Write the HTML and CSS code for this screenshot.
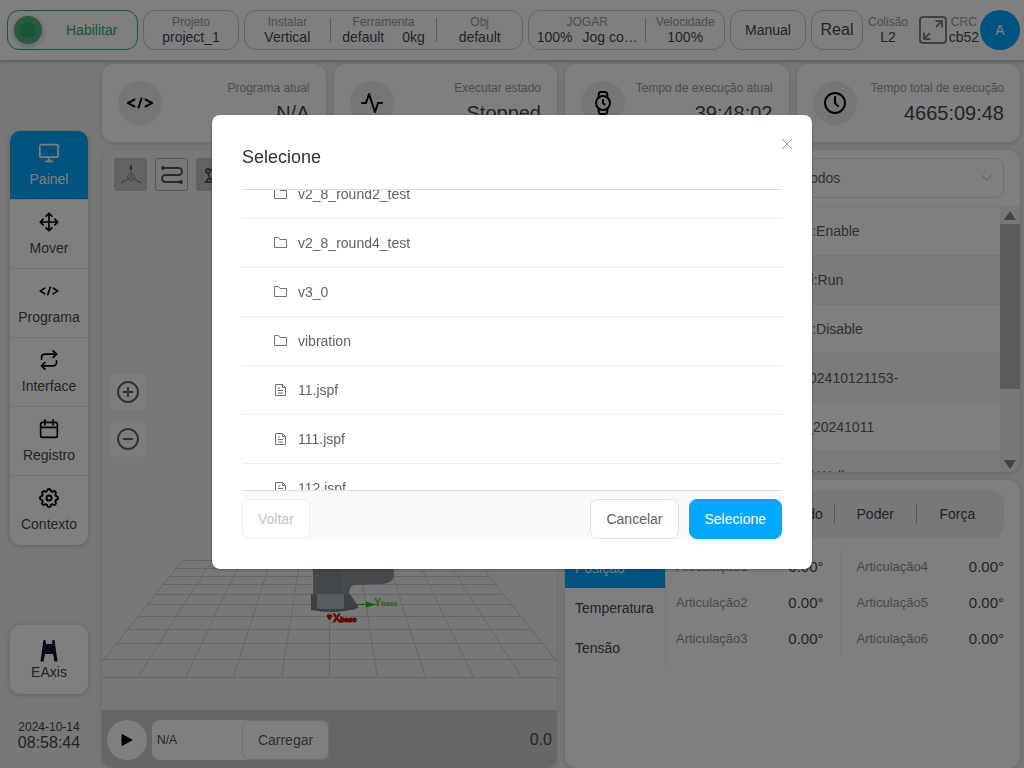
FILE: index.html
```html
<!DOCTYPE html>
<html lang="pt">
<head>
    <meta charset="UTF-8">
    <meta name="viewport" content="width=device-width, initial-scale=1.0">
    <title>Painel</title>
    <link rel="stylesheet" href="styles.css">
</head>
<body>

    <div class="app">
        <header class="topbar">
            <button class="enable-btn"><span class="led"></span><span>Habilitar</span></button>
            <div class="box project">
                <div class="info"><span class="label">Projeto</span><span class="value">project_1</span></div>
            </div>
            <div class="box setup">
                <div class="info"><span class="label">Instalar</span><span class="value">Vertical</span></div>
                <div class="info wide"><span class="label">Ferramenta</span><span class="value tool"><span>default</span><span>0kg</span></span></div>
                <div class="info"><span class="label">Obj</span><span class="value">default</span></div>
            </div>
            <div class="box jog">
                <div class="info wide"><span class="label">JOGAR</span><span class="value jog-value"><span>100%</span><span>Jog co…</span></span></div>
                <div class="info"><span class="label">Velocidade</span><span class="value">100%</span></div>
            </div>
            <button class="box mode-btn">Manual</button>
            <button class="box real-btn">Real</button>
            <div class="info"><span class="label">Colisão</span><span class="value">L2</span></div>
            <div class="topbar-end">
                <button class="plain-btn" aria-label="Tela cheia">
                    <svg class="fullscreen" width="30" height="30" viewBox="0 0 30 30"><rect x="2" y="2" width="26" height="26" rx="3"/><path d="M18 12l6-6M17.500 6H24V12.500M12 18l-6 6M6 17.500V24H12.500"/></svg>
                </button>
                <div class="info"><span class="label">CRC</span><span class="value">cb52</span></div>
                <button class="avatar">A</button>
            </div>
        </header>

        <div class="body">
            <aside class="sidebar">
                <nav class="menu">
                    <a class="menu-item active" href="#painel">
                        <svg class="icon" viewBox="0 0 24 24"><rect x="1" y="2" width="22" height="15" rx="2"/><path d="M8 22h8M12 17v5"/></svg>
                        <span>Painel</span>
                    </a>
                    <a class="menu-item" href="#mover">
                        <svg class="icon" viewBox="0 0 24 24"><path d="M5 8.500L1.500 12L5 15.500M8.500 5L12 1.500L15.500 5M15.500 19L12 22.500L8.500 19M19 8.500L22.500 12L19 15.500M2 12h20M12 2v20"/></svg>
                        <span>Mover</span>
                    </a>
                    <a class="menu-item" href="#programa">
                        <svg class="icon" viewBox="0 0 24 24"><path d="M7 8.500L1.500 12L7 15.500M17 8.500L22.500 12L17 15.500M13.500 7.500L10.500 16.500"/></svg>
                        <span>Programa</span>
                    </a>
                    <a class="menu-item" href="#interface">
                        <svg class="icon" viewBox="0 0 24 24"><path d="M17 1l4 4-4 4M3 11V9a4 4 0 0 1 4-4h14M7 23l-4-4 4-4M21 13v2a4 4 0 0 1-4 4H3"/></svg>
                        <span>Interface</span>
                    </a>
                    <a class="menu-item" href="#registro">
                        <svg class="icon" viewBox="0 0 24 24"><rect x="2" y="4" width="20" height="18" rx="2"/><path d="M17 1v6M7 1v6M2 10h20"/></svg>
                        <span>Registro</span>
                    </a>
                    <a class="menu-item" href="#contexto">
                        <svg class="icon" viewBox="2 2 20 20"><path d="M10.325 4.317c.426-1.756 2.924-1.756 3.350 0a1.724 1.724 0 0 0 2.573 1.066c1.543-.94 3.310.826 2.370 2.370a1.724 1.724 0 0 0 1.065 2.572c1.756.426 1.756 2.924 0 3.350a1.724 1.724 0 0 0-1.066 2.573c.94 1.543-.826 3.310-2.370 2.370a1.724 1.724 0 0 0-2.572 1.065c-.426 1.756-2.924 1.756-3.350 0a1.724 1.724 0 0 0-2.573-1.066c-1.543.94-3.310-.826-2.370-2.370a1.724 1.724 0 0 0-1.065-2.572c-1.756-.426-1.756-2.924 0-3.350a1.724 1.724 0 0 0 1.066-2.573c-.94-1.543.826-3.310 2.370-2.370.996.608 2.296.07 2.572-1.065z"/><circle cx="12" cy="12" r="2.500"/></svg>
                        <span>Contexto</span>
                    </a>
                </nav>
                <a class="menu-item eaxis" href="#eaxis">
                    <svg class="eaxis-icon" width="18" height="22" viewBox="0 0 18 22"><path d="M3.500 0H5.500L6 4H12L12.500 0H14.500L17.500 21.500H14.500L13 14H5L3.500 21.500H.5z"/></svg>
                    <span>EAxis</span>
                </a>
                <div class="clock">
                    <span class="date">2024-10-14</span>
                    <span class="time">08:58:44</span>
                </div>
            </aside>

            <main class="content">
                <section class="stats">
                    <div class="card stat">
                        <span class="stat-icon"><svg class="stat-svg" viewBox="0 0 24 24"><path d="M6.500 8.500L0 12L6.500 15.500M17.500 8.500L24 12L17.500 15.500M13.500 7.500L10.500 16.500"/></svg></span>
                        <div class="stat-text"><span class="label">Programa atual</span><span class="number">N/A</span></div>
                    </div>
                    <div class="card stat">
                        <span class="stat-icon"><svg class="stat-svg" viewBox="0 0 24 24"><path d="M22 12h-4l-3 9L9 3l-3 9H2"/></svg></span>
                        <div class="stat-text"><span class="label">Executar estado</span><span class="number">Stopped</span></div>
                    </div>
                    <div class="card stat">
                        <span class="stat-icon"><svg class="stat-svg" viewBox="0 0 24 24"><circle cx="12" cy="12" r="7"/><path d="M12 9v3l1.500 1.500M16.510 17.350l-.35 3.830a2 2 0 0 1-2 1.820H9.830a2 2 0 0 1-2-1.820l-.35-3.830m.010-10.700l.35-3.830A2 2 0 0 1 9.830 1h4.350a2 2 0 0 1 2 1.820l.35 3.830"/></svg></span>
                        <div class="stat-text"><span class="label">Tempo de execução atual</span><span class="number">39:48:02</span></div>
                    </div>
                    <div class="card stat">
                        <span class="stat-icon"><svg class="stat-svg" viewBox="0 0 24 24"><circle cx="12" cy="12" r="10"/><path d="M12 6v6l3 3"/></svg></span>
                        <div class="stat-text"><span class="label">Tempo total de execução</span><span class="number">4665:09:48</span></div>
                    </div>
                </section>

                <section class="card viewer">
                    <div class="scene">
                        <svg class="scene-svg" viewBox="0 0 455 560" preserveAspectRatio="xMidYMax meet">
                            <!-- floor grid -->
                            <path class="floor" d="M81 410.500H374M74 418.500H380M68 426.500H387M62 434.500H393M54 444.500H401M46 454.500H409M37 466.500H418M26 479.500H429M15 493.500H440M0 509.500H455M0 527.500H455
                                M80.500 410.500L-12.500 527.500M110 410.500L35.500 527.500M139 410.500L83.500 527.500M168.500 410.500L131.500 527.500M198 410.500L179.500 527.500M227.500 410.500V527.500M257 410.500L275.500 527.500M286 410.500L323.500 527.500M315.500 410.500L371.500 527.500M345 410.500L419.500 527.500M374.500 410.500L467.500 527.500"/>
                            <!-- robot base -->
                            <path d="M211 380H292V424Q292 433 281 434L252 435Q247 436 247 444V446H211z" fill="#8d9499"/>
                            <path d="M216 380H240V445H216z" fill="#868e93"/>
                            <path d="M209 444H248L256 456Q254 461 242 460H209z" fill="#7d858b"/>
                            <path d="M215 444H242V459H215z" fill="#b2b8bd"/>
                            <path d="M209 457Q232 463 256 455V458Q234 465 209 460z" fill="#727c85"/>
                            <!-- axes -->
                            <path d="M256 454.500H270" stroke="#00c800"/>
                            <path d="M264 451.500L274 454.500L264 457.500z" fill="#00c800"/>
                            <path d="M227.500 460V470" stroke="#c5c7cc"/>
                            <path d="M225.500 465H229.500L229.500 467L227.500 470L225.500 467z" fill="#e00000" stroke="#e00000"/>
                            <text class="axis y-axis" x="272" y="456">Y<tspan class="sub">base</tspan></text>
                            <text class="axis x-axis" x="231" y="472">X<tspan class="sub">base</tspan></text>
                        </svg>
                        <div class="view-tools">
                            <button class="view-btn shaded" aria-label="Eixos">
                                <svg width="22" height="22" viewBox="0 0 22 22" fill="none" stroke="#888"><path d="M11 3V13M11 13L3 18M11 13L19 18"/><circle cx="11" cy="13" r="3.500"/><path d="M11 1L12 5H10zM1 19L4 17M21 19L18 17" stroke="#555"/></svg>
                            </button>
                            <button class="view-btn" aria-label="Trajetória">
                                <svg width="24" height="22" viewBox="0 0 24 22" fill="none" stroke="#555" stroke-width="2"><path d="M3 4H18.500A3.500 3.500 0 0 1 18.500 11H5.500A3.500 3.500 0 0 0 5.500 18H21"/><circle cx="3" cy="4" r="1"/><circle cx="21" cy="18" r="1"/></svg>
                            </button>
                            <button class="view-btn shaded" aria-label="Robô">
                                <svg width="18" height="18" viewBox="0 0 18 18" fill="none" stroke="#555" stroke-width="2"><circle cx="4" cy="5" r="2"/><path d="M6 4L13 3L16 7M4 7L6 13M2 16H11V13H4z"/></svg>
                            </button>
                        </div>
                        <div class="zoom-tools">
                            <button class="zoom-btn" aria-label="Ampliar"><svg width="24" height="24" viewBox="0 0 24 24"><circle cx="12" cy="12" r="10"/><path d="M12 7v10M7 12h10"/></svg></button>
                            <button class="zoom-btn" aria-label="Reduzir"><svg width="24" height="24" viewBox="0 0 24 24"><circle cx="12" cy="12" r="10"/><path d="M7 12h10"/></svg></button>
                        </div>
                    </div>
                    <div class="player">
                        <button class="play-btn" aria-label="Iniciar"><svg width="12" height="14" viewBox="0 0 12 14"><path d="M1 1.500L11 7L1 12.500z" fill="#000" stroke="#000"/></svg></button>
                        <div class="loader">
                            <input class="file-input" type="text" value="N/A" aria-label="Programa">
                            <button class="load-btn">Carregar</button>
                        </div>
                        <span class="player-time">0.0</span>
                    </div>
                </section>

                <div class="right">
                    <section class="card logs">
                        <div class="log-filter">
                            <div class="select-wrap">
                                <select class="select" aria-label="Filtro"><option>Todos</option></select>
                                <svg class="chevron" width="12" height="8" viewBox="0 0 12 8"><path d="M1 1L6 6.500L11 1"/></svg>
                            </div>
                        </div>
                        <div class="log-body">
                            <div class="log-list">
                                <table class="log-table">
                                    <tr><td class="log-kind"></td><td>Robot:Enable</td></tr>
                                    <tr><td class="log-kind"></td><td>Painel:Run</td></tr>
                                    <tr><td class="log-kind"></td><td>Robot:Disable</td></tr>
                                    <tr><td class="log-kind"></td><td>log_202410121153-</td></tr>
                                    <tr><td class="log-kind"></td><td>teste_20241011</td></tr>
                                    <tr><td class="log-kind"></td><td>Painel:Wall</td></tr>
                                </table>
                            </div>
                            <div class="scrollbar">
                                <svg width="12" height="17" viewBox="0 0 12 17"><path d="M6 4L12 13H0z"/></svg>
                                <div class="thumb"></div>
                                <svg class="down" width="12" height="17" viewBox="0 0 12 17"><path d="M0 5H12L6 14z"/></svg>
                            </div>
                        </div>
                    </section>

                    <section class="card status">
                        <div class="tabs">
                            <button class="tab">Comando</button>
                            <button class="tab">Poder</button>
                            <button class="tab">Força</button>
                        </div>
                        <div class="status-body">
                            <div class="side-tabs">
                                <button class="side-tab active">Posição</button>
                                <button class="side-tab">Temperatura</button>
                                <button class="side-tab">Tensão</button>
                            </div>
                            <dl class="joints">
                                <div class="joint"><dt>Articulação1</dt><dd>0.00°</dd></div>
                                <div class="joint"><dt>Articulação2</dt><dd>0.00°</dd></div>
                                <div class="joint"><dt>Articulação3</dt><dd>0.00°</dd></div>
                            </dl>
                            <dl class="joints">
                                <div class="joint"><dt>Articulação4</dt><dd>0.00°</dd></div>
                                <div class="joint"><dt>Articulação5</dt><dd>0.00°</dd></div>
                                <div class="joint"><dt>Articulação6</dt><dd>0.00°</dd></div>
                            </dl>
                        </div>
                    </section>
                </div>
            </main>
        </div>
    </div>

    <svg class="symbols" width="0" height="0">
        <symbol id="folder" viewBox="0 0 14 14"><path d="M.5 1.500H4.500L6 3.500H12.500V11.500H.5z"/></symbol>
        <symbol id="file" viewBox="0 0 14 14"><path d="M1.500 1.500H8.500L11.500 4.500V12.500H1.500zM8.500 1.500V4.500H11.500M4 5H6M4 7.500H9M4 10H9"/></symbol>
    </svg>

    <div class="overlay">
        <div class="modal" role="dialog" aria-labelledby="modal-title">
            <button class="close-btn" aria-label="Fechar"><svg width="12" height="12" viewBox="0 0 12 12"><path d="M1 1L11 11M11 1L1 11"/></svg></button>
            <h2 class="modal-title" id="modal-title">Selecione</h2>
            <div class="file-list">
                <ul class="files">
                    <li class="file"><svg class="file-icon"><use href="#folder"/></svg>v2_8_round2_test</li>
                    <li class="file"><svg class="file-icon"><use href="#folder"/></svg>v2_8_round4_test</li>
                    <li class="file"><svg class="file-icon"><use href="#folder"/></svg>v3_0</li>
                    <li class="file"><svg class="file-icon"><use href="#folder"/></svg>vibration</li>
                    <li class="file"><svg class="file-icon"><use href="#file"/></svg>11.jspf</li>
                    <li class="file"><svg class="file-icon"><use href="#file"/></svg>111.jspf</li>
                    <li class="file"><svg class="file-icon"><use href="#file"/></svg>112.jspf</li>
                </ul>
            </div>
            <div class="modal-footer">
                <button class="btn back" disabled>Voltar</button>
                <button class="btn">Cancelar</button>
                <button class="btn primary">Selecione</button>
            </div>
        </div>
    </div>

</body>
</html>
```

FILE: styles.css
```css
* {
    box-sizing: border-box;
}

body {
    margin: 0;
    font-family: "Liberation Sans", Arial, sans-serif;
    font-size: 14px;
    color: #48494c;
    background-color: #edf2f0;
}

button,
input,
select {
    font: inherit;
    color: inherit;
    cursor: pointer;
}

button {
    padding: 0;
    border: none;
    background: none;
}

a {
    color: inherit;
    text-decoration: none;
}

.app {
    display: flex;
    flex-direction: column;
    height: 100vh;
    overflow: hidden;
}

/* Top bar */
.topbar {
    display: flex;
    align-items: center;
    gap: 5px;
    height: 60px;
    flex: none;
    padding: 0 4px 0 7px;
    background-color: #fff;
    box-shadow: 0 1px 4px rgba(0, 0, 0, 0.3);
}

.enable-btn {
    display: flex;
    align-items: center;
    gap: 24px;
    width: 131px;
    height: 40px;
    padding-left: 6px;
    border: 1px solid #2fae70;
    border-radius: 12px;
    color: #2fae70;
}

.led {
    width: 28px;
    height: 28px;
    border: 6px solid #55b083;
    border-radius: 50%;
    background-color: #2fae70;
    box-shadow: 0 2px 6px rgba(0, 80, 40, 0.3);
}

.box {
    display: flex;
    align-items: center;
    justify-content: center;
    height: 40px;
    border: 1px solid #c4c6ca;
    border-radius: 12px;
}

.project {
    width: 96px;
}

.setup {
    width: 279px;
}

.jog {
    width: 197px;
}

.mode-btn {
    width: 76px;
}

.real-btn {
    width: 52px;
    font-size: 16px;
}

.info {
    display: flex;
    flex-direction: column;
    align-items: center;
    line-height: 15px;
}

.box .info {
    flex: 4;
}

.box .info.wide {
    flex: 5;
}

.box .jog-value {
    gap: 10px;
}

.jog .info.wide {
    flex: 6;
}

.info + .info {
    height: 24px;
    justify-content: center;
    border-left: 1px solid #b4b6ba;
}

.label {
    font-size: 12px;
    color: #9a9da3;
}

.value {
    display: flex;
    gap: 18px;
}

.topbar-end {
    display: flex;
    align-items: center;
    gap: 1px;
    margin-left: auto;
}

.plain-btn {
    display: flex;
}

.fullscreen {
    fill: none;
    stroke: #858585;
    stroke-width: 2;
}

.avatar {
    width: 40px;
    height: 40px;
    border-radius: 50%;
    background-color: #00a6ff;
    color: #fff;
}

/* Sidebar */
.body {
    display: flex;
    flex: 1;
    min-height: 0;
}

.sidebar {
    display: flex;
    flex-direction: column;
    width: 102px;
    padding: 71px 14px 17px 10px;
}

.menu,
.eaxis {
    border-radius: 10px;
    background-color: #fff;
    box-shadow: 0 1px 5px rgba(0, 0, 0, 0.2);
    overflow: hidden;
}

.menu-item {
    display: flex;
    flex-direction: column;
    align-items: center;
    gap: 6px;
    height: 69px;
    padding-top: 12px;
    border-bottom: 1px solid #e6e6e6;
    line-height: 20px;
}

.menu-item:last-child {
    border-bottom: none;
}

.menu-item.active {
    background-color: #00a6ff;
    color: #fff;
}

.icon {
    width: 20px;
    height: 20px;
    fill: none;
    stroke: currentColor;
    stroke-width: 2;
    stroke-linecap: round;
    stroke-linejoin: round;
}

.menu-item:not(.active) .icon {
    stroke: #000;
}

.eaxis {
    flex: none;
    gap: 0;
    margin-top: auto;
    padding-top: 15px;
    border: none;
}

.eaxis-icon {
    fill: #0a0f2a;
}

.clock {
    display: flex;
    flex-direction: column;
    align-items: center;
    margin-top: 25px;
    line-height: 16px;
}

.date {
    font-size: 12px;
}

.time {
    font-size: 16px;
}

/* Content */
.content {
    display: grid;
    grid-template-columns: minmax(0, 1fr) minmax(0, 1fr);
    grid-template-rows: auto minmax(0, 1fr);
    gap: 8px;
    flex: 1;
    padding: 4px 4px 0 0;
}

.card {
    border-radius: 12px;
    background-color: #fff;
    box-shadow: 0 1px 5px rgba(0, 0, 0, 0.15);
    overflow: hidden;
}

.stats {
    grid-column: 1 / 3;
    display: grid;
    grid-template-columns: repeat(4, 1fr);
    gap: 8px;
}

.stat {
    display: flex;
    align-items: center;
    justify-content: space-between;
    height: 78px;
    padding: 0 16px;
}

.stat-icon {
    display: flex;
    align-items: center;
    justify-content: center;
    width: 44px;
    height: 44px;
    border-radius: 50%;
    background-color: #ededed;
}

.stat-svg {
    width: 24px;
    height: 24px;
    fill: none;
    stroke: #000;
    stroke-width: 2;
    stroke-linecap: round;
    stroke-linejoin: round;
    overflow: visible;
}

.stat-text {
    display: flex;
    flex-direction: column;
    align-items: flex-end;
    line-height: 20px;
}

.number {
    font-size: 20px;
    line-height: 30px;
}

/* 3D viewer */
.viewer {
    display: flex;
    flex-direction: column;
    background-color: #eef0f5;
}

.scene {
    position: relative;
    flex: 1;
    min-height: 0;
}

.scene-svg {
    position: absolute;
    width: 100%;
    height: 100%;
}

.floor {
    fill: none;
    stroke: #cccdd2;
}

.axis {
    font-size: 11px;
}

.sub {
    font-size: 7px;
    font-weight: bold;
}

.x-axis {
    fill: #d00000;
    stroke: #d00000;
}

.y-axis {
    fill: #6cc22c;
    font-weight: bold;
}

.view-tools {
    position: absolute;
    top: 8px;
    left: 12px;
    display: flex;
    gap: 8px;
}

.view-btn {
    display: flex;
    align-items: center;
    justify-content: center;
    width: 33px;
    height: 33px;
    border: 1px solid #b0b0b4;
    border-radius: 3px;
}

.view-btn.shaded {
    border-color: #c4c4c6;
    background-color: #c4c4c6;
}

.zoom-tools {
    position: absolute;
    top: 40%;
    left: 8px;
    display: flex;
    flex-direction: column;
    gap: 11px;
}

.zoom-btn {
    display: flex;
    align-items: center;
    justify-content: center;
    width: 36px;
    height: 36px;
    border-radius: 5px;
    background-color: #fafafa;
    fill: none;
    stroke: #666;
    stroke-width: 2;
}

.player {
    display: flex;
    align-items: center;
    gap: 5px;
    height: 58px;
    padding: 2px 5px 0;
    background-color: #cccdd1;
}

.play-btn {
    display: flex;
    align-items: center;
    justify-content: center;
    width: 40px;
    height: 40px;
    border-radius: 50%;
    background-color: #fff;
}

.loader {
    display: flex;
    border-radius: 8px;
    background-color: #fff;
}

.file-input {
    width: 90px;
    height: 40px;
    padding: 0 5px;
    border: none;
    background: none;
    font-size: 12px;
}

.load-btn {
    width: 87px;
    height: 40px;
    border: 1px solid #dcdfe6;
    border-radius: 8px;
    color: #606266;
}

.player-time {
    margin-left: auto;
    font-size: 16px;
}

/* Logs */
.right {
    display: flex;
    flex-direction: column;
    gap: 8px;
    min-height: 0;
}

.logs {
    display: flex;
    flex-direction: column;
    flex: none;
    height: 322px;
}

.log-filter {
    display: flex;
    justify-content: flex-end;
    padding: 8px 16px;
    border-bottom: 1px solid #ebeef5;
}

.select-wrap {
    position: relative;
    width: 216px;
}

.select {
    appearance: none;
    width: 100%;
    height: 40px;
    padding: 0 14px;
    border: 1px solid #dcdfe6;
    border-radius: 8px;
    background: none;
    color: #606266;
}

.chevron {
    position: absolute;
    top: 16px;
    right: 11px;
    fill: none;
    stroke: #b4b7be;
}

.log-body {
    display: flex;
    flex: 1;
    min-height: 0;
}

.log-list {
    flex: 1;
    overflow: hidden;
}

.log-table {
    width: 100%;
    border-collapse: separate;
    border-spacing: 0;
    color: #606266;
}

.log-table td {
    height: 49px;
    padding: 0 0 0 1px;
    border-bottom: 1px solid #ebeef5;
}

.log-table tr:nth-child(even) td {
    background-color: #f7f7f7;
}

.log-table .log-kind {
    width: 48%;
}

.scrollbar {
    display: flex;
    flex-direction: column;
    align-items: center;
    width: 20px;
    background-color: #f1f1f1;
    fill: #868686;
}

.thumb {
    width: 100%;
    height: 165px;
    background-color: #b8b8b8;
}

.down {
    margin-top: auto;
}

/* Robot status */
.status {
    flex: 1;
    padding-top: 10px;
}

.tabs {
    display: flex;
    align-items: center;
    justify-content: flex-end;
    height: 48px;
    margin: 0 16px 10px;
    padding: 0 6px;
    border-radius: 12px;
    background-color: #f0f0f0;
}

.tab {
    width: 20%;
    height: 20px;
}

.tab + .tab {
    border-left: 1px solid #b0b0b0;
}

.status-body {
    display: flex;
    align-items: flex-start;
}

.side-tabs {
    display: flex;
    flex-direction: column;
    width: 101px;
    border-right: 1px solid #ececec;
}

.side-tab {
    height: 40px;
    padding-left: 10px;
    text-align: left;
}

.side-tab.active {
    background-color: #00a6ff;
    color: #fff;
}

.joints {
    flex: 1;
    margin: 0;
    padding: 0 16px 0 10px;
}

.joints + .joints {
    padding-left: 16px;
    border-left: 1px solid #f2f2f2;
}

.joint {
    display: flex;
    align-items: center;
    justify-content: space-between;
    height: 36px;
}

.joint dt {
    font-size: 13px;
    color: #909399;
}

.joint dd {
    margin: 0;
    font-size: 15px;
}

/* File picker */
.symbols {
    position: absolute;
}

.overlay {
    position: fixed;
    inset: 0;
    background-color: rgba(0, 0, 0, 0.5);
}

.modal {
    position: relative;
    width: 600px;
    max-width: 90%;
    margin: 15vh auto 0;
    padding: 30px;
    border-radius: 8px;
    background-color: #fff;
    box-shadow: 0 1px 3px rgba(0, 0, 0, 0.3);
}

.close-btn {
    position: absolute;
    top: 23px;
    right: 19px;
    display: flex;
    stroke: #909399;
}

.modal-title {
    margin: 0 0 20px;
    font-size: 18px;
    font-weight: normal;
    line-height: 24px;
    color: #303133;
}

.file-list {
    height: 302px;
    border-top: 1px solid #dcdcdc;
    border-bottom: 1px solid #dcdcdc;
    overflow: hidden;
}

/* list is scrolled part of a row */
.files {
    margin: -20px 0 0;
    padding: 0;
    list-style: none;
}

.file {
    display: flex;
    align-items: center;
    gap: 10px;
    height: 49px;
    padding: 0 32px;
    border-bottom: 1px solid #ebeef0;
    color: #606266;
}

.file-icon {
    width: 14px;
    height: 14px;
    fill: none;
    stroke: #707276;
}

.modal-footer {
    display: flex;
    gap: 10px;
    padding-top: 8px;
    background-color: #f9f9f9;
}

.btn {
    height: 40px;
    padding: 0 15px;
    border: 1px solid #dcdfe6;
    border-radius: 8px;
    background-color: #fff;
    color: #606266;
}

.btn.back {
    margin-right: auto;
    border-color: #ebeef5;
    color: #c0c4cc;
}

.btn.primary {
    border-color: #00a6ff;
    background-color: #00a6ff;
    color: #fff;
}
```
